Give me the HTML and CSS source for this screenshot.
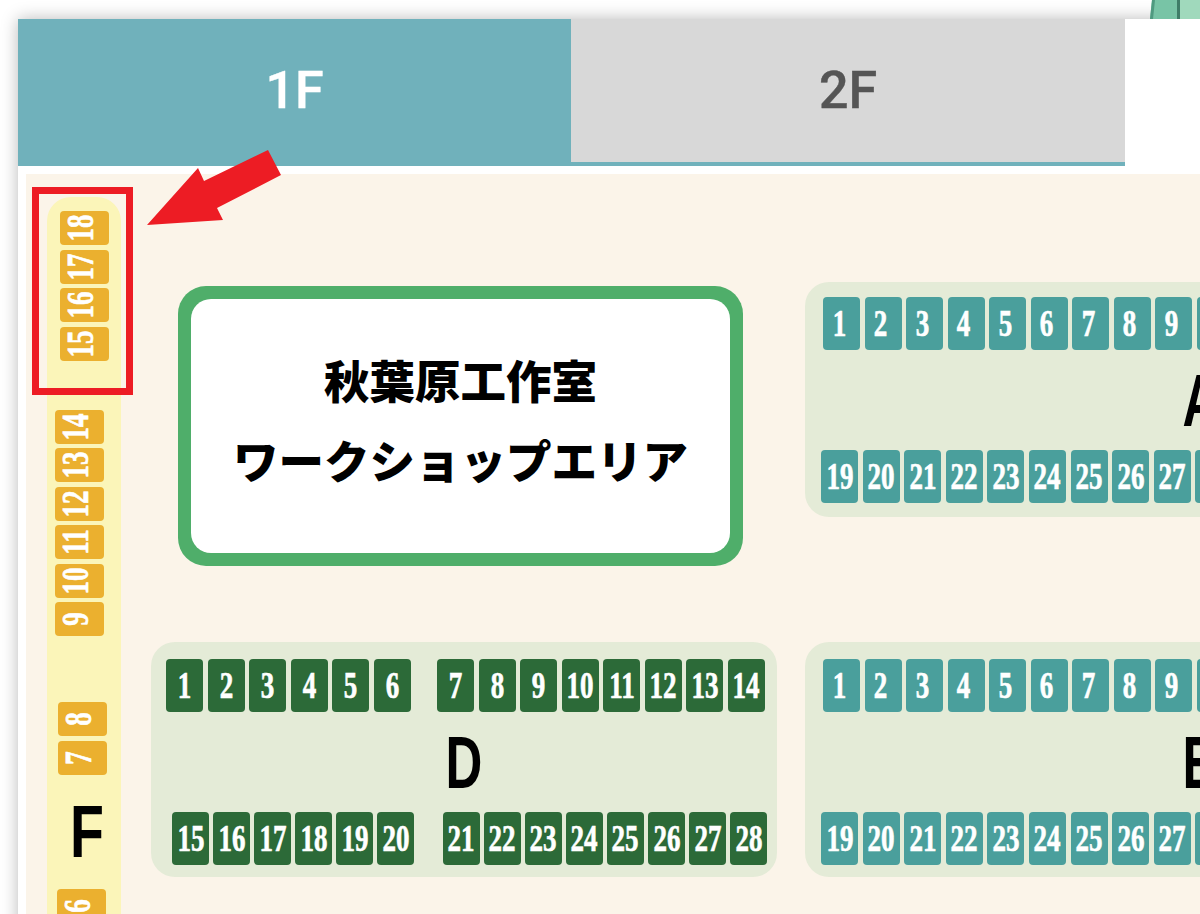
FILE: index.html
```html
<!DOCTYPE html>
<html lang="ja">
<head>
  <meta charset="UTF-8">
  <meta name="viewport" content="width=device-width, initial-scale=1.0">
  <title>フロアマップ</title>
  <link rel="stylesheet" href="styles.css">
</head>
<body>
  <svg class="figure" width="50" height="19" viewBox="0 0 50 19">
    <path d="M2 0 H50 V19 H0 Z" fill="#78c4a6"/>
    <path d="M30 0 H50 V19 H30 Z" fill="#a0d9bc"/>
    <path d="M2 0 L0 19 H3 L5 0 Z" fill="#4f9a80"/>
    <path d="M27 0 V19 H30 V0 Z" fill="#3f7d68"/>
  </svg>
  <div class="card">
    <div class="tabs">
      <div class="tab tab-active">1F</div>
      <div class="tab">2F</div>
    </div>
    <div class="map">
      <div class="strip">
        <div class="strip-group strip-a">
          <div class="seat seat-f"><span>18</span></div>
          <div class="seat seat-f"><span>17</span></div>
          <div class="seat seat-f"><span>16</span></div>
          <div class="seat seat-f"><span>15</span></div>
        </div>
        <div class="strip-group strip-b">
          <div class="seat seat-f"><span>14</span></div>
          <div class="seat seat-f"><span>13</span></div>
          <div class="seat seat-f"><span>12</span></div>
          <div class="seat seat-f"><span>11</span></div>
          <div class="seat seat-f"><span>10</span></div>
          <div class="seat seat-f"><span>9</span></div>
        </div>
        <div class="strip-group strip-c">
          <div class="seat seat-f"><span>8</span></div>
          <div class="seat seat-f"><span>7</span></div>
        </div>
        <div class="letter letter-f">F</div>
        <div class="strip-group strip-d">
          <div class="seat seat-f"><span>6</span></div>
        </div>
      </div>

      <div class="floor">
        <div class="workshop">
          <div class="workshop-inner">
            <p>秋葉原工作室</p>
            <p>ワークショップエリア</p>
          </div>
        </div>

        <div class="block block-wide block-a">
          <div class="row row-top">
            <div class="seat"><span>1</span></div><div class="seat"><span>2</span></div><div class="seat"><span>3</span></div>
            <div class="seat"><span>4</span></div><div class="seat"><span>5</span></div><div class="seat"><span>6</span></div>
            <div class="seat"><span>7</span></div><div class="seat"><span>8</span></div><div class="seat"><span>9</span></div>
            <div class="seat"><span>10</span></div>
          </div>
          <div class="letter">A</div>
          <div class="row row-bottom">
            <div class="seat"><span>19</span></div><div class="seat"><span>20</span></div><div class="seat"><span>21</span></div>
            <div class="seat"><span>22</span></div><div class="seat"><span>23</span></div><div class="seat"><span>24</span></div>
            <div class="seat"><span>25</span></div><div class="seat"><span>26</span></div><div class="seat"><span>27</span></div>
            <div class="seat"><span>28</span></div>
          </div>
        </div>

        <div class="block block-d">
          <div class="row row-top">
            <div class="seat"><span>1</span></div><div class="seat"><span>2</span></div><div class="seat"><span>3</span></div>
            <div class="seat"><span>4</span></div><div class="seat"><span>5</span></div><div class="seat"><span>6</span></div>
            <div class="seat seat-split"><span>7</span></div><div class="seat"><span>8</span></div><div class="seat"><span>9</span></div>
            <div class="seat"><span>10</span></div><div class="seat"><span>11</span></div><div class="seat"><span>12</span></div>
            <div class="seat"><span>13</span></div><div class="seat"><span>14</span></div>
          </div>
          <div class="letter">D</div>
          <div class="row row-bottom">
            <div class="seat"><span>15</span></div><div class="seat"><span>16</span></div><div class="seat"><span>17</span></div>
            <div class="seat"><span>18</span></div><div class="seat"><span>19</span></div><div class="seat"><span>20</span></div>
            <div class="seat seat-split"><span>21</span></div><div class="seat"><span>22</span></div><div class="seat"><span>23</span></div>
            <div class="seat"><span>24</span></div><div class="seat"><span>25</span></div><div class="seat"><span>26</span></div>
            <div class="seat"><span>27</span></div><div class="seat"><span>28</span></div>
          </div>
        </div>

        <div class="block block-wide block-e">
          <div class="row row-top">
            <div class="seat"><span>1</span></div><div class="seat"><span>2</span></div><div class="seat"><span>3</span></div>
            <div class="seat"><span>4</span></div><div class="seat"><span>5</span></div><div class="seat"><span>6</span></div>
            <div class="seat"><span>7</span></div><div class="seat"><span>8</span></div><div class="seat"><span>9</span></div>
            <div class="seat"><span>10</span></div>
          </div>
          <div class="letter">E</div>
          <div class="row row-bottom">
            <div class="seat"><span>19</span></div><div class="seat"><span>20</span></div><div class="seat"><span>21</span></div>
            <div class="seat"><span>22</span></div><div class="seat"><span>23</span></div><div class="seat"><span>24</span></div>
            <div class="seat"><span>25</span></div><div class="seat"><span>26</span></div><div class="seat"><span>27</span></div>
            <div class="seat"><span>28</span></div>
          </div>
        </div>
      </div>
    </div>
  </div>

  <!-- red annotation over the screenshot -->
  <div class="mark"></div>
  <svg class="arrow" width="140" height="80" viewBox="0 0 140 80">
    <polygon points="0,75 51,18 57,31 121,0 134,25 70,58 76,70" fill="#ed1c24"/>
  </svg>
</body>
</html>
```

FILE: styles.css
```css
html, body {
  margin: 0;
  padding: 0;
  height: 914px;
  overflow: hidden;
  background-color: #fff;
}
body {
  position: relative;
  padding: 19px 0 0 18px;
  box-sizing: border-box;
  font-family: "Liberation Sans", Arial, sans-serif;
}
.figure {
  position: absolute;
  top: 0;
  left: 1150px;
}
.card {
  background-color: #fff;
  box-shadow: 0 0 16px rgba(0, 0, 0, 0.28);
  height: 920px;
  overflow: hidden;
}
.tabs {
  display: flex;
  width: 1107px;
}
.tab {
  flex: 1;
  height: 143px;
  line-height: 143px;
  border-bottom: 4px solid #70b1bb;
  background-color: #d8d8d8;
  color: #555;
  font-family: Roboto, sans-serif;
  font-size: 52px;
  font-weight: 500;
  -webkit-text-stroke: 0.4px;
  text-align: center;
}
.tab-active {
  flex: none;
  width: 553px;
  background-color: #70b1bb;
  color: #fff;
}

.map {
  display: flex;
  margin: 8px 0 0 8px;
  padding: 23px 0 0 21px;
  height: 740px;
  background-color: #fbf4e9;
}
.strip {
  flex: none;
  width: 74px;
  margin-right: 30px;
  padding-top: 14px;
  box-sizing: border-box;
  border-radius: 24px 24px 0 0;
  background-color: #fbf5b9;
}
.strip-group {
  display: flex;
  flex-direction: column;
  gap: 4.5px;
}
.strip-a { margin-left: 13px; }
.strip-b { margin: 49px 0 0 8px; }
.strip-c { margin: 66px 0 0 11px; }
.strip-d { margin: 18px 0 0 10px; }

.seat {
  flex: none;
  display: flex;
  align-items: center;
  justify-content: center;
  width: 37px;
  height: 53px;
  border-radius: 4px;
  background-color: #4a9f9c;
  color: #fff;
  font-family: "Liberation Serif", serif;
  font-size: 38px;
  font-weight: bold;
  -webkit-text-stroke: 0.7px #fff;
}
.seat span {
  display: block;
  transform: translateY(-1.5px) scaleX(0.71);
}
.seat-f {
  width: 49px;
  height: 34px;
  background-color: #ebb02f;
}
.seat-f span {
  transform: translateX(-5px) rotate(-90deg) scaleX(0.71);
}
.seat-split {
  margin-left: 22px;
}

.letter {
  font-size: 75px;
  font-weight: bold;
  line-height: 80px;
  color: #000;
  text-align: center;
  transform: scaleX(0.68);
}
.letter-f {
  margin-top: 16px;
  padding-left: 8px;
  transform: scaleX(0.74);
}

.floor {
  display: grid;
  grid-template-columns: 626px 781px;
  grid-template-rows: 360px 235px;
  column-gap: 28px;
  padding-top: 85px;
}
.workshop {
  width: 565px;
  height: 280px;
  margin: 4px 0 0 27px;
  padding: 13px;
  box-sizing: border-box;
  border-radius: 28px;
  background-color: #4fae6a;
}
.workshop-inner {
  height: 100%;
  box-sizing: border-box;
  padding-bottom: 14px;
  display: flex;
  flex-direction: column;
  justify-content: center;
  gap: 17px;
  border-radius: 20px;
  background-color: #fff;
  font-family: "Noto Sans CJK JP", sans-serif;
  font-size: 45.5px;
  font-weight: 900;
  line-height: 63px;
  text-align: center;
}
.workshop p {
  margin: 0;
}
.block {
  height: 235px;
  box-sizing: border-box;
  padding-top: 15px;
  border-radius: 24px;
  background-color: #e4ebd7;
}
.block .letter {
  height: 100px;
  line-height: 100px;
}
.block-d,
.block-e {
  padding-top: 17px;
}
.block-a .letter { padding-left: 16px; }
.block-e .letter { padding-left: 12px; }
.row {
  display: flex;
  gap: 4.5px;
  padding-left: 18px;
}
.row-bottom {
  padding-left: 16px;
  gap: 4.6px;
}
.block-wide .row-top .seat span {
  margin-right: 5px;
}
.block-d .seat {
  background-color: #2c6a38;
}
.block-d .row-top {
  padding-left: 15px;
}
.block-d .row-bottom {
  padding-left: 21px;
  gap: 4.1px;
}
.block-d .row-bottom .seat-split {
  margin-left: 24px;
}

.mark {
  position: absolute;
  left: 32px;
  top: 187px;
  width: 101px;
  height: 208px;
  box-sizing: border-box;
  border: 7px solid #ed1c24;
}
.arrow {
  position: absolute;
  left: 147px;
  top: 150px;
}
```
